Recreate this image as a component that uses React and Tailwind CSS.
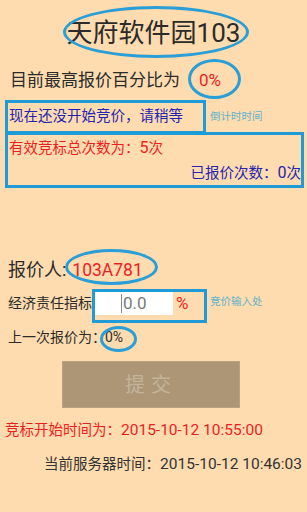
import React from 'react';

const font = { fontFamily: 'Roboto, "Noto Sans CJK SC", sans-serif' };

/**
 * 竞价页面
 */
const App = () => {
    return (
        <div
            className="relative w-[307px] h-[512px] overflow-hidden bg-[#fedcaf] text-[#2b2b2b]"
            style={font}
        >
            {/* 标题 */}
            <div className="relative h-[60px]">
                <div className="absolute left-[63px] top-[6px] w-[186px] h-[52px] rounded-[50%] border-[3px] border-[#2a9ed6]"></div>
                <div className="pt-[17px] text-center text-[26px] leading-[32px]">天府软件园103</div>
            </div>

            {/* 最高报价 */}
            <div className="relative mt-[8px] flex pl-[10px] text-[17px] leading-[24px]">
                <span>目前最高报价百分比为</span>
                <span className="ml-[19px] text-[#ec1f1f]">0%</span>
                <div className="absolute left-[188px] top-[-9px] w-[53px] h-[40px] rounded-[50%] border-[3px] border-[#2a9ed6]"></div>
            </div>

            {/* 状态 */}
            <div className="mt-[8px] flex items-center">
                <div className="ml-[5px] flex h-[34px] w-[201px] items-center border-[3px] border-[#1f9bd7] pl-[1px] text-[14.5px] text-[#2424b0]">
                    现在还没开始竞价，请稍等
                </div>
                <span className="ml-[4px] text-[10.5px] text-[#5fb2ca]">倒计时时间</span>
            </div>
            <div className="ml-[5px] mt-[-2px] h-[56px] w-[299px] border-[3px] border-[#1f9bd7] pt-[3px] pl-[1px] text-[14.5px] leading-[20px]">
                <div className="text-[#ec1f1f]">有效竞标总次数为：<span className="text-[16px]">5</span>次</div>
                <div className="mt-[4px] text-right text-[#2424b0]">已报价次数：<span className="text-[16px]">0</span>次</div>
            </div>

            {/* 报价人 */}
            <div className="relative mt-[69px] flex items-center pl-[8px] text-[18px] leading-[26px]">
                <span>报价人:</span>
                <span className="ml-[6px] text-[17.5px] text-[#ec1f1f]">103A781</span>
                <div className="absolute left-[65px] top-[-8px] w-[93px] h-[36px] rounded-[50%] border-[3px] border-[#2a9ed6]"></div>
            </div>

            {/* 输入 */}
            <div className="mt-[6px] flex h-[34px] items-start pl-[8px]">
                <span className="mt-[4px] w-[84px] text-[14px] leading-[20px]">经济责任指标</span>
                <div className="flex h-[34px] w-[115px] items-start border-[3px] border-[#1f9bd7]">
                    <div className="flex h-[23px] w-[78px] items-center bg-white">
                        <div className="ml-[26px] h-[19px] w-[1px] bg-[#8a8a8a]"></div>
                        <span className="ml-[1px] text-[17px] leading-[23px] text-[#7a7a7a]">0.0</span>
                    </div>
                    <span className="ml-[3px] text-[17px] leading-[22px] text-[#ec1f1f]">%</span>
                </div>
                <span className="ml-[3px] mt-[5px] text-[10.5px] leading-[16px] text-[#5fb2ca]">竞价输入处</span>
            </div>

            {/* 上一次报价 */}
            <div className="relative mt-[4px] flex pl-[8px] text-[14px] leading-[20px]">
                <span>上一次报价为：</span>
                <span className="ml-[-1px]">0%</span>
                <div className="absolute left-[100px] top-[-1px] w-[37px] h-[26px] rounded-[50%] border-[3px] border-[#2a9ed6]"></div>
            </div>

            {/* 提交 */}
            <button className="ml-[62px] mt-[14px] flex h-[47px] w-[178px] items-center justify-center border border-[#b9a282] bg-[#ad9676] text-[20px] tracking-[6px] text-[#c3b49c]">
                提交
            </button>

            {/* 时间 */}
            <div className="mt-[12px] pl-[5px] text-[14.5px] leading-[20px] text-[#ec1f1f]">
                竞标开始时间为：<span className="text-[15.5px]">2015-10-12 10:55:00</span>
            </div>
            <div className="mt-[13px] pr-[5px] text-right text-[14.5px] leading-[20px] text-[#333]">
                当前服务器时间：<span className="text-[15.5px]">2015-10-12 10:46:03</span>
            </div>
        </div>
    );
};

export default App;
